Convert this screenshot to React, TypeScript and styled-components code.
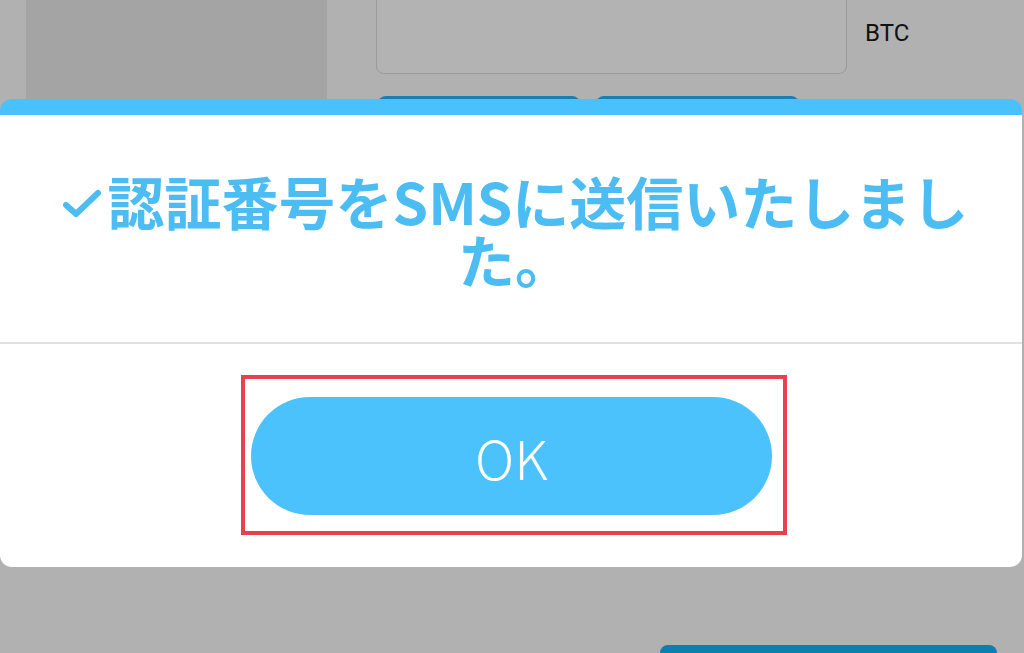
import React from "react";
import styled, { createGlobalStyle } from "styled-components";

const Global = createGlobalStyle`
  html, body { margin: 0; padding: 0; }
  body { width: 1024px; height: 653px; overflow: hidden; font-family: "Noto Sans CJK JP", "Noto Sans", sans-serif; }
`;

const Screen = styled.div`
  position: relative;
  width: 1024px;
  height: 653px;
  overflow: hidden;
  background: #b1b1b1;
  display: grid;
  grid-template-columns: 26px 301px 1fr 24px;
  align-items: start;
`;

const Sidebar = styled.div`
  grid-column: 2;
  height: 320px;
  background: #a4a4a4;
`;

const Main = styled.div`
  grid-column: 3;
  height: 653px;
  display: flex;
  flex-direction: column;
  padding-left: 49px;
  box-sizing: border-box;
`;

const AmountRow = styled.div`
  display: flex;
  align-items: center;
  gap: 18px;
  margin-top: -20px;
`;

const AmountBox = styled.div`
  width: 469px;
  height: 92px;
  border: 1px solid #9a9a9a;
  border-radius: 8px;
  background: #b3b3b3;
`;

const Unit = styled.span`
  font-family: Roboto, "Noto Sans", sans-serif;
  font-size: 24px;
  color: #111;
  margin-top: 12px;
`;

const ButtonRow = styled.div`
  display: flex;
  gap: 16px;
  margin-top: 22px;
  margin-left: 2px;
`;

const BgButton = styled.div<{ $w: number }>`
  width: ${(p) => p.$w}px;
  height: 40px;
  border-radius: 8px;
  background: #1a7fb0;
`;

const BottomButton = styled.div`
  margin-top: auto;
  align-self: flex-end;
  width: 337px;
  height: 8px;
  margin-right: 3px;
  border-radius: 8px 8px 0 0;
  background: #0c7fb1;
`;

const Modal = styled.div`
  position: absolute;
  left: 0;
  top: 99px;
  width: 1022px;
  height: 468px;
  background: #ffffff;
  border-top: 16px solid #48c1fc;
  border-radius: 12px;
  box-sizing: border-box;
  display: flex;
  flex-direction: column;
`;

const MessageArea = styled.div`
  height: 229px;
  box-sizing: border-box;
  padding: 56px 0 0 8px;
  text-align: center;
  border-bottom: 2px solid #e1e1e1;
`;

const Message = styled.p`
  margin: 0 auto;
  width: 936px;
  font-family: "Noto Sans CJK JP", sans-serif;
  font-weight: 700;
  font-size: 57px;
  line-height: 58px;
  color: #4bbdf3;
`;

const Check = styled.svg`
  width: 40px;
  height: 30px;
  margin-right: 6px;
  vertical-align: 6px;
`;

const Footer = styled.div`
  flex: 1;
  display: flex;
  justify-content: center;
  align-items: flex-start;
  padding: 31px 0 0 6px;
`;

const Highlight = styled.div`
  border: 4px solid #e8404c;
  padding: 18px 11px 16px 6px;
`;

const OkButton = styled.button`
  width: 521px;
  height: 118px;
  border: none;
  border-radius: 59px;
  background: #4bc2fb;
  color: #ffffff;
  font-family: "Noto Sans CJK JP", "Noto Sans", sans-serif;
  font-weight: 300;
  font-size: 54px;
  padding: 0;
  display: flex;
  align-items: center;
  justify-content: center;
`;

export default function App() {
  return (
    <>
      <Global />
      <Screen>
        <Sidebar />
        <Main>
          <AmountRow>
            <AmountBox />
            <Unit>BTC</Unit>
          </AmountRow>
          <ButtonRow>
            <BgButton $w={202} />
            <BgButton $w={203} />
          </ButtonRow>
          <BottomButton />
        </Main>
        <Modal>
          <MessageArea>
            <Message>
              <Check viewBox="0 0 40 30">
                <path
                  d="M4 16 L14 25 L36 4"
                  fill="none"
                  stroke="#4bbdf3"
                  strokeWidth="6"
                  strokeLinecap="round"
                  strokeLinejoin="round"
                />
              </Check>
              認証番号をSMSに送信いたしました。
            </Message>
          </MessageArea>
          <Footer>
            <Highlight>
              <OkButton>OK</OkButton>
            </Highlight>
          </Footer>
        </Modal>
      </Screen>
    </>
  );
}
